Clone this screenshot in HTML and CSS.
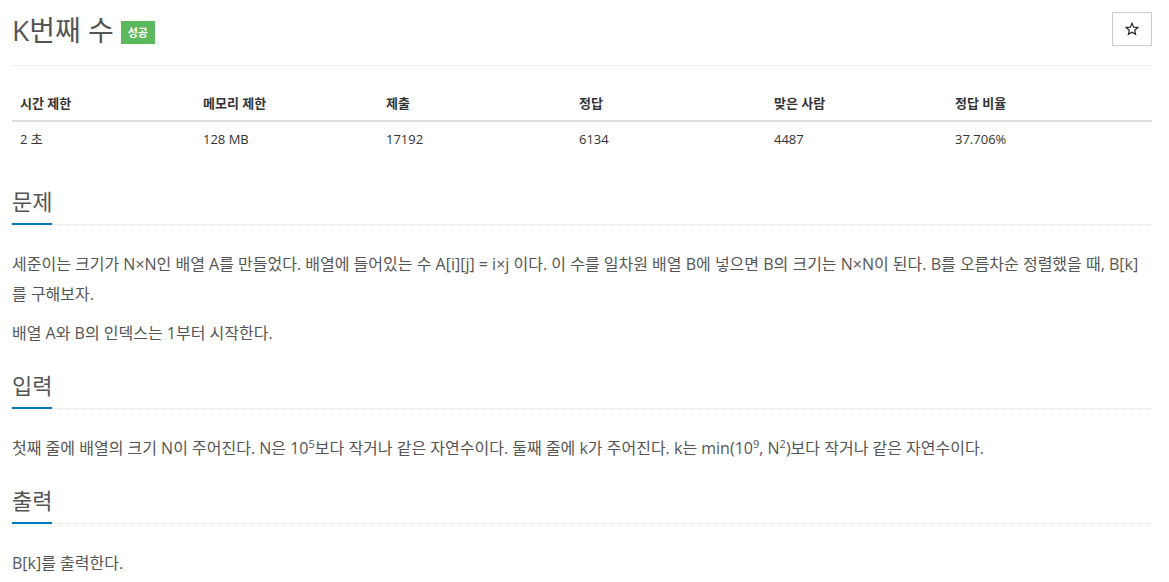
FILE: index.html
```html
<!DOCTYPE html>
<html lang="ko">
<head>
<meta charset="utf-8">
<title>K번째 수</title>
<link rel="stylesheet" href="styles.css">
</head>
<body>
<div class="page">
  <div class="page-header">
    <h1 class="title"><span class="title-text">K번째 수</span><span class="label-success">성공</span></h1>
    <button class="star-btn" type="button" aria-label="즐겨찾기">
      <svg class="star-icon" width="14" height="14" viewBox="0 0 24 24" aria-hidden="true">
        <path d="M12 2.2l2.9 6.6 7.1.6-5.4 4.7 1.6 7-6.2-3.7-6.2 3.7 1.6-7L2 9.4l7.1-.6z" fill="none" stroke="#222" stroke-width="2" stroke-linejoin="miter"/>
      </svg>
    </button>
  </div>

  <table class="info">
    <thead>
      <tr>
        <th>시간 제한</th>
        <th>메모리 제한</th>
        <th>제출</th>
        <th>정답</th>
        <th>맞은 사람</th>
        <th>정답 비율</th>
      </tr>
    </thead>
    <tbody>
      <tr>
        <td>2 초</td>
        <td>128 MB</td>
        <td>17192</td>
        <td>6134</td>
        <td>4487</td>
        <td>37.706%</td>
      </tr>
    </tbody>
  </table>

  <section class="section first">
    <h2 class="headline"><span>문제</span></h2>
    <div class="problem-text">
      <p>세준이는 크기가 N×N인 배열 A를 만들었다. 배열에 들어있는 수 A[i][j] = i×j 이다. 이 수를 일차원 배열 B에 넣으면 B의 크기는 N×N이 된다. B를 오름차순 정렬했을 때, B[k]를 구해보자.</p>
      <p>배열 A와 B의 인덱스는 1부터 시작한다.</p>
    </div>
  </section>

  <section class="section">
    <h2 class="headline"><span>입력</span></h2>
    <div class="problem-text">
      <p>첫째 줄에 배열의 크기 N이 주어진다. N은 10<sup>5</sup>보다 작거나 같은 자연수이다. 둘째 줄에 k가 주어진다. k는 min(10<sup>9</sup>, N<sup>2</sup>)보다 작거나 같은 자연수이다.</p>
    </div>
  </section>

  <section class="section">
    <h2 class="headline"><span>출력</span></h2>
    <div class="problem-text">
      <p>B[k]를 출력한다.</p>
    </div>
  </section>
</div>
</body>
</html>
```

FILE: styles.css
```css
html, body {
  margin: 0;
  padding: 0;
  background: #fff;
}
body {
  font-family: "Open Sans", "Noto Sans CJK KR", sans-serif;
  color: #333;
  font-size: 14px;
}
.page {
  width: 1140px;
  margin-left: 12px;
}
.page-header {
  display: flex;
  justify-content: space-between;
  align-items: flex-start;
  padding-top: 12px;
  padding-bottom: 8px;
  border-bottom: 1px solid #eee;
  height: 45px;
}
.title {
  margin: 0;
  font-weight: 400;
  font-size: 28px;
  line-height: 36px;
  color: #555;
  display: flex;
  align-items: center;
}
.label-success {
  display: inline-block;
  margin-left: 7px;
  margin-top: 5px;
  background: #5cb85c;
  color: #fff;
  font-size: 11px;
  font-weight: 700;
  line-height: 23px;
  padding: 0 7px;
  height: 23px;
}
.star-btn {
  width: 40px;
  height: 34px;
  background: #fff;
  border: 1px solid #ccc;
  border-radius: 0;
  padding: 0;
  display: flex;
  align-items: center;
  justify-content: center;
}
.star-icon {
  display: block;
}
.info {
  width: 100%;
  border-collapse: collapse;
  margin-top: 20px;
  font-size: 13px;
}
.info th, .info td {
  text-align: left;
  padding: 8px;
  line-height: 18px;
}
.info th {
  font-weight: 700;
  border-bottom: 2px solid #ddd;
}
.info th:nth-child(1) { width: 167px; }
.info th:nth-child(2) { width: 167px; }
.info th:nth-child(3) { width: 177px; }
.info th:nth-child(4) { width: 179px; }
.info th:nth-child(5) { width: 165px; }
.section {
  margin-top: 22px;
}
.section.first {
  margin-top: 30px;
}
.headline {
  margin: 0;
  font-size: 22px;
  font-weight: 400;
  color: #555;
  line-height: 30px;
  border-bottom: 1px dotted #ddd;
}
.headline span {
  display: inline-block;
  border-bottom: 2px solid #0076c0;
  margin-bottom: -1px;
  padding-bottom: 7px;
}
.problem-text {
  padding-top: 24px;
  font-size: 16px;
  line-height: 30px;
  color: #555;
}
.problem-text p {
  margin: 0 0 9px;
}
.problem-text p:last-child {
  margin-bottom: 0;
}
.problem-text sup {
  font-size: 11px;
  line-height: 0;
  vertical-align: 6px;
}
```
